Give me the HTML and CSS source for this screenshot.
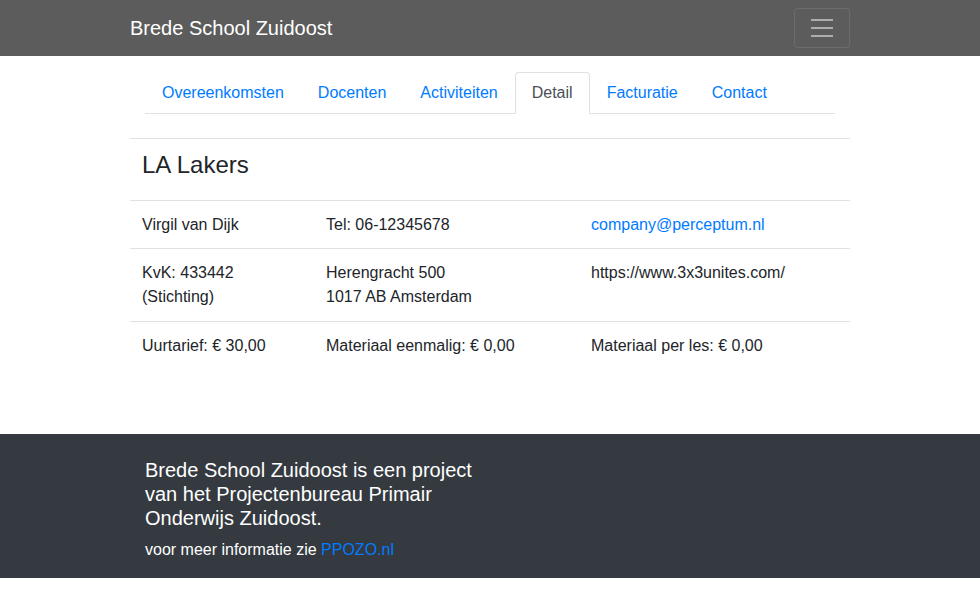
FILE: index.html
```html
<!DOCTYPE html>
<html lang="nl">
<head>
<meta charset="utf-8">
<title>Brede School Zuidoost</title>
<link rel="stylesheet" href="styles.css">
</head>
<body>
<nav class="navbar">
  <div class="container nav-inner">
    <a class="brand" href="#">Brede School Zuidoost</a>
    <button class="toggler" type="button" aria-label="Menu">
      <svg width="30" height="30" viewBox="0 0 30 30"><path stroke="rgba(255,255,255,0.5)" stroke-width="2" stroke-linecap="butt" d="M4 7h22M4 15h22M4 23h22"/></svg>
    </button>
  </div>
</nav>
<main class="container main">
  <ul class="tabs">
    <li><a class="tab" href="#">Overeenkomsten</a></li>
    <li><a class="tab" href="#">Docenten</a></li>
    <li><a class="tab" href="#">Activiteiten</a></li>
    <li><a class="tab active" href="#">Detail</a></li>
    <li><a class="tab" href="#">Facturatie</a></li>
    <li><a class="tab" href="#">Contact</a></li>
  </ul>
  <table class="detail">
    <colgroup><col class="c1"><col class="c2"><col class="c3"></colgroup>
    <thead>
      <tr><th colspan="3"><h4 class="title">LA Lakers</h4></th></tr>
    </thead>
    <tbody>
      <tr class="first"><td>Virgil van Dijk</td><td>Tel: 06-12345678</td><td><a href="#">company@perceptum.nl</a></td></tr>
      <tr><td>KvK: 433442<br>(Stichting)</td><td>Herengracht 500<br>1017 AB Amsterdam</td><td>https://www.3x3unites.com/</td></tr>
      <tr><td>Uurtarief: € 30,00</td><td>Materiaal eenmalig: € 0,00</td><td>Materiaal per les: € 0,00</td></tr>
    </tbody>
  </table>
</main>
<footer class="footer">
  <div class="container">
    <div class="footer-col">
      <h5 class="footer-title">Brede School Zuidoost is een project van het Projectenbureau Primair Onderwijs Zuidoost.</h5>
      <p class="footer-text">voor meer informatie zie <a href="#">PPOZO.nl</a></p>
    </div>
  </div>
</footer>
</body>
</html>
```
FILE: styles.css
```css
* { box-sizing: border-box; }
html, body { margin: 0; padding: 0; }
body {
  font-family: "Liberation Sans", Arial, sans-serif;
  font-size: 16px;
  line-height: 1.5;
  color: #212529;
  background: #fff;
}
a { color: #007bff; text-decoration: none; }
.container {
  width: 720px;
  margin: 0 auto;
  padding: 0 15px;
}
.navbar {
  background: #5c5c5c;
  padding: 8px 0;
}
.nav-inner {
  display: flex;
  align-items: center;
  justify-content: space-between;
  padding: 0;
}
.brand {
  color: #fff;
  font-size: 20px;
  line-height: 30px;
  padding: 5px 0;
}
.toggler {
  width: 56px;
  height: 40px;
  background: transparent;
  border: 1px solid rgba(255,255,255,0.1);
  border-radius: 4px;
  padding: 4px 12px;
  display: flex;
  align-items: center;
  justify-content: center;
}
.toggler svg { display: block; }
.main {
  padding-top: 16px;
  padding-bottom: 48px;
}
.tabs {
  list-style: none;
  margin: 0 0 24px;
  padding: 0;
  display: flex;
  border-bottom: 1px solid #dee2e6;
}
.tabs li { margin-bottom: -1px; }
.tab {
  display: block;
  padding: 8px 16px;
  border: 1px solid transparent;
  border-top-left-radius: 4px;
  border-top-right-radius: 4px;
  line-height: 24px;
}
.tab.active {
  color: #495057;
  background: #fff;
  border-color: #dee2e6 #dee2e6 #fff;
}
.detail {
  width: 720px;
  margin: 0 -15px 16px;
  border-collapse: collapse;
}
.c1 { width: 184px; }
.c2 { width: 265px; }
.c3 { width: 271px; }
.detail th, .detail td {
  padding: 12px;
  border-top: 1px solid #dee2e6;
  text-align: left;
  vertical-align: top;
  font-weight: normal;
}
.detail .first td { padding-bottom: 11px; }
.title {
  margin: 0 0 8px;
  font-size: 24px;
  font-weight: 500;
  line-height: 28.8px;
}
.footer {
  background: #343a40;
  color: #fff;
  padding-top: 24px;
  margin-bottom: 16px;
}
.footer-col { width: 330px; }
.footer-title {
  margin: 0 0 8px;
  font-size: 20px;
  font-weight: 500;
  line-height: 1.2;
}
.footer-text {
  margin: 0;
  padding-bottom: 16px;
}
```
